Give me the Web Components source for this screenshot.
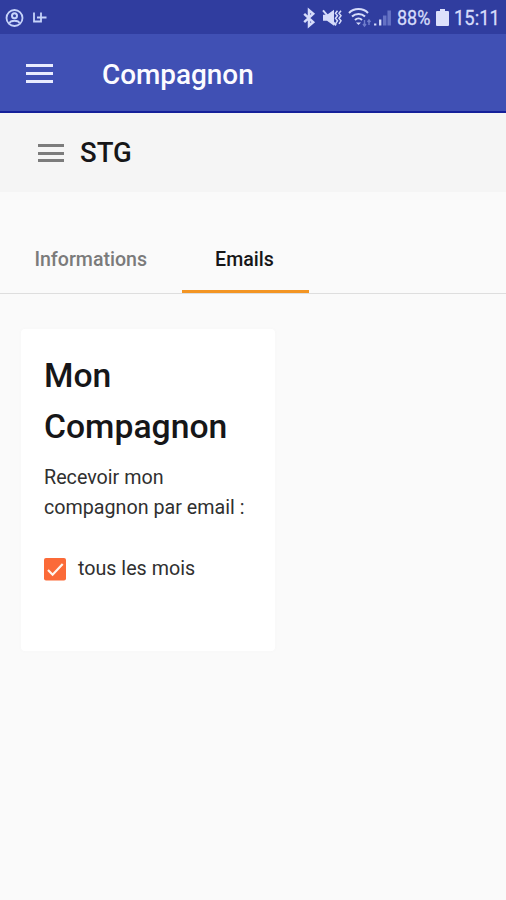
<!DOCTYPE html>
<html lang="fr">
<head>
<meta charset="utf-8">
<title>Compagnon</title>
<style>
html,body{margin:0;height:100%;background:#fafafa;font-family:Roboto,"Liberation Sans",sans-serif;color:#161618}
</style>
</head>
<body>
<app-shell></app-shell>
<script>
function define(name, html) {
  const t = document.createElement('template');
  t.innerHTML = html;
  customElements.define(name, class extends HTMLElement {
    constructor() {
      super();
      this.attachShadow({ mode: 'open' }).append(t.content.cloneNode(true));
    }
  });
}

define('status-bar', `
<style>
:host{display:flex;height:34px;box-sizing:border-box;background:#303d9f;color:#d6dcfa;justify-content:space-between;align-items:center;padding:1px 7px 0 5px}
div{display:flex;align-items:center}
svg{display:block;flex:none}
span{font-size:20px;line-height:24px;white-space:nowrap;transform-origin:0 50%;padding-top:1px}
.pct{width:34px;margin-left:5px;transform:scaleX(.9);-webkit-text-stroke:.3px}
.time{width:45px;margin-left:5px;transform:scaleX(.92);-webkit-text-stroke:.3px}
</style>
<div>
<svg width="45" height="24" viewBox="0 0 45 24" fill="none" stroke="#c6d3fa">
<circle cx="9.5" cy="12" r="8" stroke-width="1.8"/><circle cx="9.500" cy="9.700" r="2.500" stroke-width="2"/><path d="M4.700 17c.8-3 8.800-3 9.600 0" stroke-width="2"/>
<path d="M29 6.500v9h7V6.500M32 11.500h9.500" stroke-width="1.800"/>
</svg>
</div>
<div>
<svg width="88" height="24" viewBox="4 0 88 24" fill="none" stroke="#d6dcfa" style="overflow:visible">
<g transform="translate(2.700 .3)"><path d="M1.500 7.500l9 8.300-4.200 3.600V4l4.200 3.600-9 8.300" stroke-width="2.500"/></g>
<g transform="translate(2 -.2)"><path d="M21 9h4l7-5v16l-7-5h-4z" fill="#d6dcfa" stroke="none"/><path d="M21 4.500l13 15" stroke-width="2"/><path d="M35.500 5l-2 2.500 2 2.500-2 2.500 2 2.500-2 3M39 5l-2 2.500 2 2.500-2 2.500 2 2.500-2 3" stroke-width="1.500"/></g>
<g transform="translate(2.500 -1)"><path d="M46.500 8c5-5.200 14-5.200 19 0M49.500 11.500c3.500-3.500 9.500-3.500 13 0M52.500 15c2-2 5-2 7 0" stroke-width="2"/><path d="M53.500 17.500h5L56 20z" fill="#d6dcfa" stroke="none"/><path d="M62 15v6M60.500 19l1.500 2 1.500-2M66.500 20v-5M65 17l1.500-2 1.500 2" stroke="#6f7dcb" stroke-width="1.400"/></g>
<g transform="translate(1.700 -.5)"><path d="M73.500 18v2M78.500 14v6" stroke-width="2.300"/><path d="M83 10v10M87.500 5v15" stroke="#6572c4" stroke-width="3.500"/></g>
</svg>
<span class="pct">88%</span>
<svg width="13" height="20" viewBox="0 0 13 20" style="margin-left:5px"><path d="M4 1h5v2h3q1 0 1 1v13q0 1-1 1H1q-1 0-1-1V4q0-1 1-1h3z" fill="#dce1fb"/></svg>
<span class="time">15:11</span>
</div>`);

define('menu-icon', `
<style>
:host{display:flex;flex-direction:column;justify-content:space-between;width:27px;height:19px;color:#e9ecff}
i{display:block;height:3px;background:currentColor}
</style><i></i><i></i><i></i>`);

define('app-bar', `
<style>
:host{display:flex;align-items:center;height:79px;box-sizing:border-box;background:#4050b4;border-bottom:2px solid #15209a;padding-left:26px;color:#fbfbff}
menu-icon{margin-top:2px}
span{margin-left:49px;padding-top:4px;font-size:27.900px;font-weight:500;line-height:34px}
</style><menu-icon></menu-icon><span><slot></slot></span>`);

define('section-header', `
<style>
:host{display:flex;align-items:center;height:79px;background:#f5f5f5;padding-left:38px}
menu-icon{width:26px;height:18px;color:#7c7c7c;margin-top:1px}
span{margin-left:16px;font-size:27.500px;font-weight:500;line-height:34px}
</style><menu-icon></menu-icon><span><slot></slot></span>`);

define('tab-bar', `
<style>
:host{display:flex;height:68px;margin-top:34px;border-bottom:1px solid #dedede;box-sizing:border-box}
</style><slot></slot>`);

define('tab-item', `
<style>
:host{display:flex;justify-content:center;box-sizing:border-box;height:67px;padding-top:19px;width:181.500px;font-size:19.600px;line-height:30px;font-weight:500;color:#7b7b7b}
:host([active]){width:127px;padding-right:1px;color:#161618;border-bottom:3px solid #f39523}
</style><slot></slot>`);

define('info-card', `
<style>
:host{display:block;box-sizing:border-box;width:254px;height:322px;margin:35px 0 0 21px;padding:21px 23px;background:#fff;border-radius:4px;box-shadow:0 0 3px #f5f5f5}
h1{margin:0;font-size:33.700px;line-height:51px;font-weight:500}
p{margin:11px 0 0;font-size:19.700px;line-height:30px;white-space:nowrap;color:#303030}
</style><h1><slot name="title"></slot></h1><p><slot name="text"></slot></p><slot></slot>`);

define('check-option', `
<style>
:host{display:flex;align-items:center;margin-top:31px;font-size:19.700px;line-height:30px;color:#303030;gap:12px}
svg{display:block}
</style><svg width="22" height="23" viewBox="0 0 22 23"><rect width="22" height="22.500" rx="2" fill="#fb6a38"/><path d="M4 12l4.600 4.700L18.700 6" fill="none" stroke="#fff6ee" stroke-width="2.200"/></svg><span><slot></slot></span>`);

define('app-shell', `
<style>:host{display:block;min-height:900px;background:#fafafa}</style>
<status-bar></status-bar>
<app-bar>Compagnon</app-bar>
<section-header>STG</section-header>
<tab-bar><tab-item>Informations</tab-item><tab-item active>Emails</tab-item></tab-bar>
<info-card><span slot="title">Mon<br>Compagnon</span><span slot="text">Recevoir mon<br>compagnon par email :</span><check-option>tous les mois</check-option></info-card>`);
</script>
</body>
</html>
